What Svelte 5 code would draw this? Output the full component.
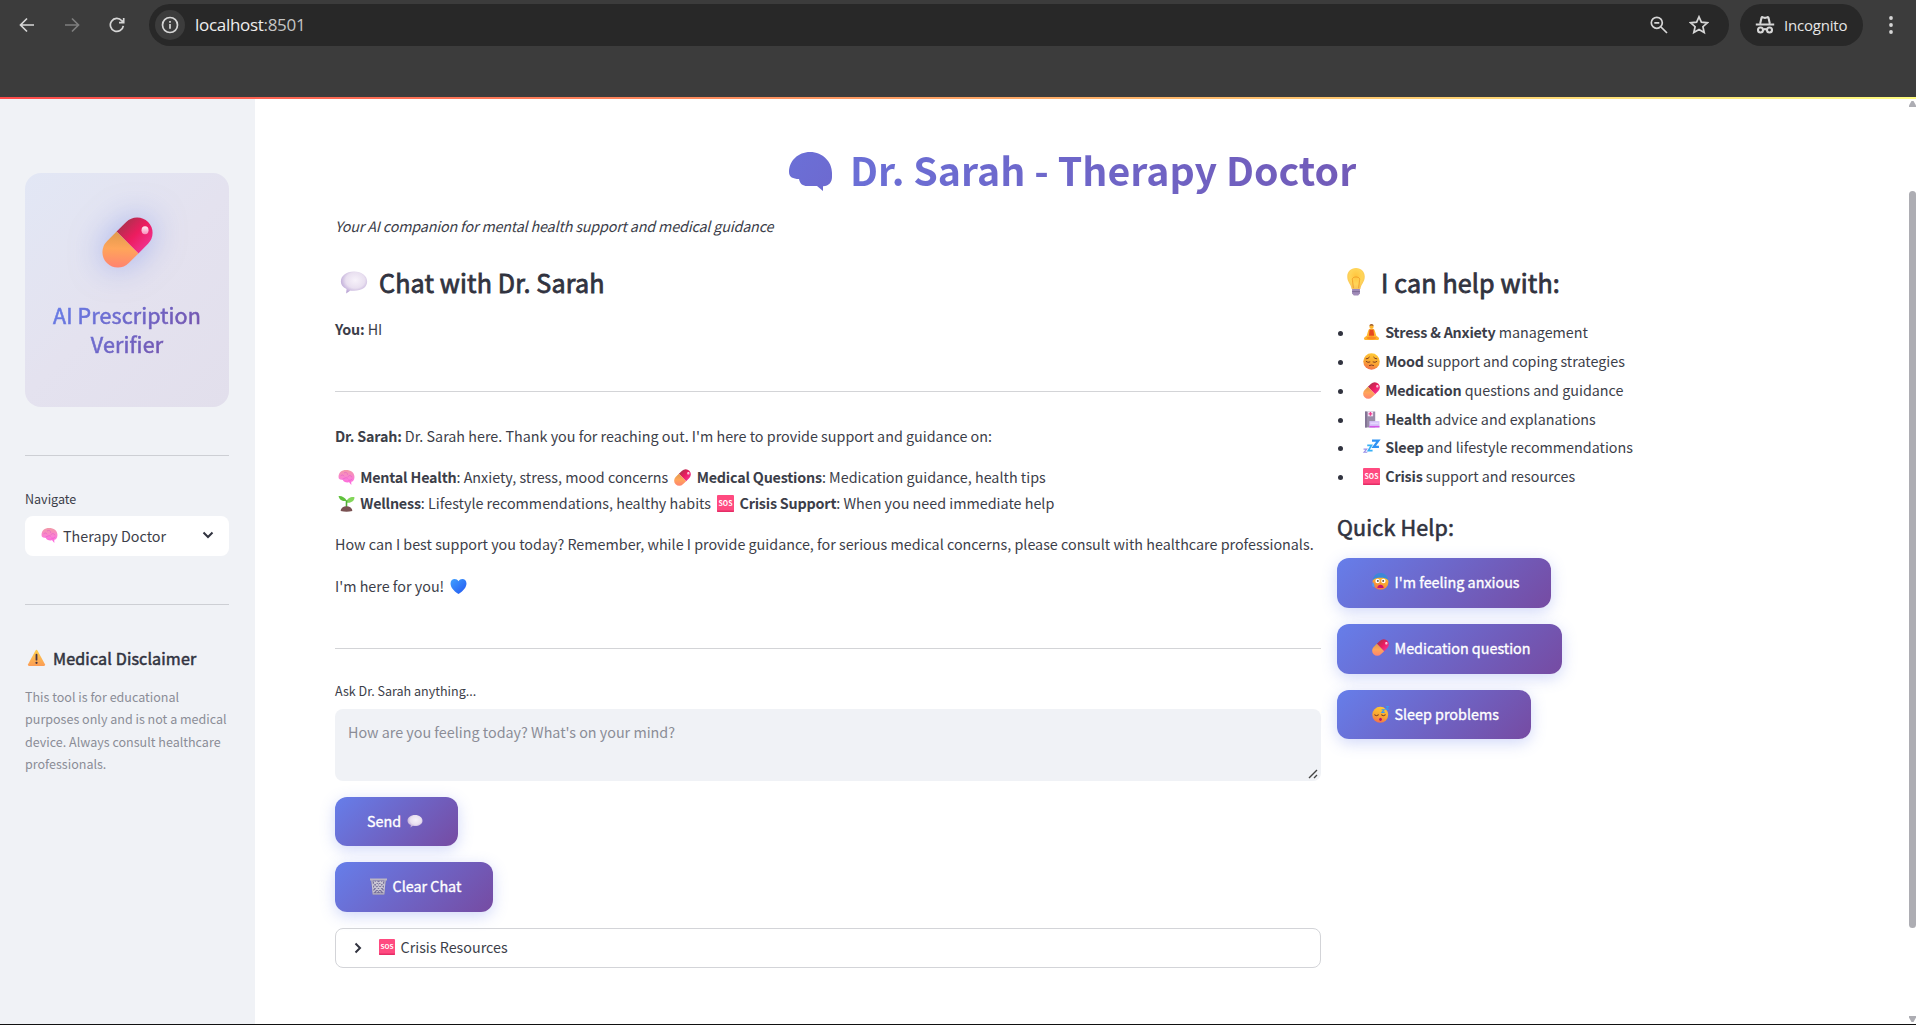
<script>
  const help = [
    ['lotus', 'Stress & Anxiety', 'management'],
    ['pensive', 'Mood', 'support and coping strategies'],
    ['pill', 'Medication', 'questions and guidance'],
    ['hospital', 'Health', 'advice and explanations'],
    ['zzz', 'Sleep', 'and lifestyle recommendations'],
    ['sos', 'Crisis', 'support and resources']
  ];
  const quick = [
    ['anxious', "I'm feeling anxious", 'q1'],
    ['pill', 'Medication question', 'q2'],
    ['sleepy', 'Sleep problems', 'q3']
  ];
</script>

{#snippet icon(name)}
  <svg class="emoji {name}" viewBox="0 0 32 32" aria-hidden="true">
    {#if name === 'pill'}
      <g transform="rotate(45 16 16) translate(16 16) scale(1.140) translate(-16 -16)">
        <path d="M7.500 16V8.500a8.500 8.500 0 0 1 17 0V16z" fill="url(#pillRed)" />
        <path d="M7.500 16v7.500a8.500 8.500 0 0 0 17 0V16z" fill="url(#pillOrange)" />
      </g>
      <ellipse cx="27" cy="8.300" rx="2.200" ry="2.500" fill="url(#shine)" />
    {:else if name === 'brain'}
      <path d="M1 15C1 7 7 2 15 2c9 0 16 5 16 13 0 6-3 9-6 9v6l-4-5c-6 1-11-1-12-5-5 1-8-1-8-5z" fill="url(#brainPink)" />
      <path d="M5 13c2-3 5-2 6 0M12 7c3-2 6 0 6 3M19 14c2-3 6-2 7 1M9 19c3-1 5-4 9-2M20 21c3 1 5 0 6-2" fill="none" stroke="#e65fcb" stroke-width="1.300" stroke-linecap="round" />
    {:else if name === 'speech'}
      <path d="M16 4c9 0 15 5 15 11.500S25 26 16 26c-2 0-3 0-4-.4L7 29l.5-5C3 22 1 19 1 15.500 1 9 7 4 16 4z" fill="url(#speechFill)" />
    {:else if name === 'bulb'}
      <path d="M16 0c6 0 10 4 10 10 0 6-4 8-5 14H11C10 18 6 16 6 10 6 4 10 0 16 0z" fill="url(#bulbFill)" />
      <path d="M13 23l-1-9c-2-5 10-5 8 0l-1 9" fill="none" stroke="#f09a26" stroke-width="1" />
      <path d="M11.500 24h9v5l-2 2.500h-5l-2-2.500z" fill="#a08bb8" />
      <path d="M11.500 27h9" stroke="#766491" stroke-width="1" />
    {:else if name === 'lotus'}
      <circle cx="16" cy="5" r="4" fill="#ffb62c" />
      <path d="M13 9q3-1.500 6 0 3 1 4 6l2 7 4 3q3 4-1 5H4q-4-1-1-5l4-3 2-7q1-5 4-6z" fill="#ffb52e" />
      <path d="M12.500 10q3.500 2 7 0l1.500 12H11z" fill="#e6491f" />
      <path d="M6 26q10-6 20 0-3 4-10 3-7 1-10-3z" fill="#fb8b24" />
      <path d="M12 4a4 4 0 0 1 8 0q-4-2-8 0z" fill="#9a5a2d" />
    {:else if name === 'pensive'}
      <circle cx="16" cy="16" r="15.500" fill="url(#face)" />
      <path d="M6 11q4 0 6-3M26 11q-4 0-6-3M6 16q3 3 7 1M26 16q-3 3-7 1M12 23.500q4-2 8 0" fill="none" stroke="#7a3a22" stroke-width="1.800" stroke-linecap="round" />
    {:else if name === 'anxious'}
      <circle cx="16" cy="16.500" r="15" fill="url(#face)" />
      <path d="M1 14C2 5 9 0 16 0s14 5 15 14c-4-4-9-5-15-5S5 10 1 14z" fill="#3d86d8" />
      <circle cx="10.500" cy="15" r="4.200" fill="#fff" /><circle cx="21.500" cy="15" r="4.200" fill="#fff" />
      <circle cx="11" cy="15" r="1.600" fill="#432" /><circle cx="21" cy="15" r="1.600" fill="#432" />
      <path d="M10 28q1-6 6-6t6 6z" fill="#c9136e" />
      <path d="M2 17q4 7 2 10-4-1-4-5z" fill="#4c9cf0" />
    {:else if name === 'sleepy'}
      <circle cx="15.500" cy="16.500" r="15" fill="url(#face)" />
      <path d="M5 17q3 3 7 0M18 17q3 3 7 0" fill="none" stroke="#6a3120" stroke-width="1.800" stroke-linecap="round" />
      <ellipse cx="16" cy="25" rx="2.500" ry="3" fill="#b5136b" />
      <path d="M18 7h5l-4.500 5H24M26 1h5l-4.500 5H32" fill="none" stroke="#399af2" stroke-width="2" />
    {:else if name === 'hospital'}
      <path d="M4 1h19v30H4z" fill="#998ca8" />
      <path d="M4 1h3v30H4z" fill="#7d6f90" />
      <path d="M9 1h10v9H9z" fill="#f3e3f6" />
      <path d="M14 2v7M10.500 5.500h7" stroke="#ef3e8f" stroke-width="2.500" />
      <path d="M12 19h19v12H12z" fill="#d7c3fa" />
      <path d="M12 28h19v3H12z" fill="#d458e8" />
      <path d="M14 23h15" stroke="#efe6ff" stroke-width="1.500" />
    {:else if name === 'zzz'}
      <path d="M17 3h12L20 15h10" fill="none" stroke="#2f93f4" stroke-width="4.200" />
      <path d="M8 12h8L10 22h8" fill="none" stroke="#36b0f6" stroke-width="3.200" />
      <path d="M1 19h6l-5 6h6" fill="none" stroke="#9a90e8" stroke-width="2.200" />
    {:else if name === 'sos'}
      <rect x="0" y="0" width="32" height="32" rx="2" fill="#ff4a80" />
      <path d="M0 29h32v1a2 2 0 0 1-2 2H2a2 2 0 0 1-2-2z" fill="#e52d66" />
      <text x="16" y="20.500" text-anchor="middle" class="sos-text">SOS</text>
    {:else if name === 'seedling'}
      <path d="M16 10C13 4 6 1 1 2c1 7 8 11 15 9z" fill="#5fc13c" />
      <path d="M16 13C17 6 24 3 31 4c0 7-7 12-15 10z" fill="#83d65a" />
      <path d="M16 10v14" stroke="#4fae35" stroke-width="3" />
      <path d="M5 30q1-9 11-9t11 9q-11 3-22 0z" fill="#7a5152" />
    {:else if name === 'heart'}
      <path d="M16 30C6 24 1 17 1 10c0-9 11-11 15-4 4-7 15-5 15 4 0 7-5 14-15 20z" fill="url(#heartBlue)" />
    {:else if name === 'warning'}
      <path d="M14 3q2-3 4 0l13 24q1 3-2 3H3q-3 0-2-3z" fill="url(#warn)" />
      <path d="M16 10v9" stroke="#453345" stroke-width="3.200" stroke-linecap="round" />
      <circle cx="16" cy="24.500" r="2" fill="#453345" />
    {:else if name === 'trash'}
      <path d="M2 4h28l-3 27H5z" fill="#77719a" />
      <path d="M3.500 4l2.500 25M28.500 4L26 29M7 6l18 20M12 6l14 14M19 6l8 8M25 6L7 26M20 6L6 20M13 6l-8 8M12 27l13-14M20 27L7 14" stroke="#cbc7d5" stroke-width="2" fill="none" />
      <path d="M0 1h32v3.500H0zM5 28.500h22V31H5z" fill="#bcb6c3" />
    {/if}
  </svg>
{/snippet}

<svg class="defs" aria-hidden="true">
  <defs>
    <linearGradient id="pillRed" x1="0" y1="0.300" x2="1" y2="0.300"><stop offset="0" stop-color="#b52e50" /><stop offset="0.500" stop-color="#ec1c5f" /><stop offset="1" stop-color="#f0308a" /></linearGradient>
    <linearGradient id="pillOrange" x1="0" y1="0" x2="1" y2="1"><stop offset="0" stop-color="#e09a4c" /><stop offset="0.400" stop-color="#ffa55a" /><stop offset="1" stop-color="#ff7878" /></linearGradient>
    <linearGradient id="shine" x1="0" y1="0" x2="0" y2="1"><stop offset="0" stop-color="#fff0f5" /><stop offset="1" stop-color="#f790bb" /></linearGradient>
    <linearGradient id="brainPink" x1="0" y1="0" x2="0" y2="1"><stop offset="0" stop-color="#f29aa8" /><stop offset="0.600" stop-color="#fb7fd6" /><stop offset="1" stop-color="#ff5fe0" /></linearGradient>
    <radialGradient id="speechFill" cx="0.550" cy="0.400" r="0.600"><stop offset="0" stop-color="#f7f2fa" /><stop offset="0.600" stop-color="#e9e0f0" /><stop offset="1" stop-color="#bba6d6" /></radialGradient>
    <radialGradient id="bulbFill" cx="0.500" cy="0.400" r="0.600"><stop offset="0" stop-color="#ffc53d" /><stop offset="0.600" stop-color="#ffd558" /><stop offset="1" stop-color="#f8c45a" /></radialGradient>
    <linearGradient id="face" x1="0.700" y1="0" x2="0.400" y2="1"><stop offset="0" stop-color="#ffcb36" /><stop offset="0.600" stop-color="#f9a432" /><stop offset="1" stop-color="#f2704f" /></linearGradient>
    <linearGradient id="heartBlue" x1="0" y1="0" x2="1" y2="1"><stop offset="0" stop-color="#3fa0ff" /><stop offset="1" stop-color="#2456f0" /></linearGradient>
    <linearGradient id="warn" x1="0" y1="0" x2="0" y2="1"><stop offset="0" stop-color="#ffce4a" /><stop offset="1" stop-color="#fb9d55" /></linearGradient>
    <linearGradient id="titleBrain" x1="0" y1="0" x2="1" y2="0.800"><stop offset="0" stop-color="#6b70d7" /><stop offset="1" stop-color="#6d6ad0" /></linearGradient>
  </defs>
</svg>

<div class="window">
  <header class="toolbar">
    <div class="bar">
      <svg class="nav back" viewBox="0 0 16 16"><path d="M15 8H2M8 1.500L1.500 8 8 14.500" /></svg>
      <svg class="nav fwd" viewBox="0 0 16 16"><path d="M1 8h13M8 1.500L14.500 8 8 14.500" /></svg>
      <svg class="nav reload" viewBox="0 0 16 16"><path d="M14.300 8.800A6.500 6.500 0 1 1 12.800 3.700L14.500 5.400M14.700 1v4.700H10" /></svg>
      <div class="omnibox">
        <span class="info"><svg viewBox="0 0 18 18"><circle cx="9" cy="9" r="7.500" /><path d="M9 8v4.800M9 5v1.700" /></svg></span>
        <span class="url">localhost<i>:8501</i></span>
        <svg class="lens" viewBox="0 0 18 18"><circle cx="6.800" cy="6.800" r="5.500" /><path d="M4.300 6.800h5M11 11l6 6" /></svg>
        <svg class="star" viewBox="0 0 20 20"><path d="M10 1.800l2.400 5.400 5.900.6-4.400 3.900 1.300 5.800-5.200-3.100-5.200 3.100 1.300-5.800-4.400-3.900 5.900-.6z" /></svg>
      </div>
      <div class="incognito">
        <svg viewBox="0 0 20 18"><path d="M5.200 7.500l1.300-5.700q.3-.9 1.200-.6l2.300.7 2.300-.7q.9-.3 1.200.6l1.300 5.700M.8 8.500h18.400" /><circle cx="5.500" cy="14" r="2.500" /><circle cx="14.500" cy="14" r="2.500" /><path d="M8 13.700q2-1.200 4 0" /></svg>
        <span>Incognito</span>
      </div>
      <svg class="dots" viewBox="0 0 4 18"><circle cx="2" cy="2" r="1.900" /><circle cx="2" cy="9" r="1.900" /><circle cx="2" cy="16" r="1.900" /></svg>
    </div>
  </header>
  <div class="rainbow"></div>

  <div class="page">
    <aside>
      <div class="card">
        <div class="bigpill">{@render icon('pill')}</div>
        <h2>AI Prescription<br />Verifier</h2>
      </div>
      <hr />
      <div class="label nav-label">Navigate</div>
      <div class="select">
        {@render icon('brain')}<span class="sel-text">Therapy Doctor</span>
        <svg class="chev" viewBox="0 0 12 8"><path d="M1.500 1.500L6 6l4.500-4.500" /></svg>
      </div>
      <hr />
      <h4>{@render icon('warning')}<span>Medical Disclaimer</span></h4>
      <p class="caption">This tool is for educational<br />purposes only and is not a medical<br />device. Always consult healthcare<br />professionals.</p>
    </aside>

    <main>
      <h1>
        <svg class="title-brain" viewBox="0 0 43 39"><path d="M0 20C0 9 9 0 21 0c13 0 22 10 22 21v4c0 5-3 9-9 9.300V39l-6-5H18c-4 0-7-2-8-7-6 0-10-2-10-7z" fill="url(#titleBrain)" /></svg>
        <span>Dr. Sarah - Therapy Doctor</span>
      </h1>
      <p class="subtitle">Your AI companion for mental health support and medical guidance</p>
      <div class="columns">
        <section class="chat">
          <h3>{@render icon('speech')}<span>Chat with Dr. Sarah</span></h3>
          <p class="you"><b>You:</b> HI</p>
          <hr />
          <p class="intro"><b>Dr. Sarah:</b> Dr. Sarah here. Thank you for reaching out. I'm here to provide support and guidance on:</p>
          <p>
            {@render icon('brain')} <b>Mental Health</b>: Anxiety, stress, mood concerns {@render icon('pill')} <b>Medical Questions</b>: Medication guidance, health tips<br />
            {@render icon('seedling')} <b>Wellness</b>: Lifestyle recommendations, healthy habits {@render icon('sos')} <b>Crisis Support</b>: When you need immediate help
          </p>
          <p>How can I best support you today? Remember, while I provide guidance, for serious medical concerns, please consult with healthcare professionals.</p>
          <p class="outro">I'm here for you! {@render icon('heart')}</p>
          <hr class="second" />
          <div class="label">Ask Dr. Sarah anything...</div>
          <div class="textarea">
            <span>How are you feeling today? What's on your mind?</span>
            <svg class="grip" viewBox="0 0 10 10"><path d="M1 9l8-8M6 9l3-3" /></svg>
          </div>
          <button class="send"><span>Send</span>{@render icon('speech')}</button>
          <button class="clear">{@render icon('trash')}<span>Clear Chat</span></button>
          <div class="expander">
            <svg class="chev" viewBox="0 0 8 12"><path d="M1.500 1.500L6 6l-4.500 4.500" /></svg>
            {@render icon('sos')}<span>Crisis Resources</span>
          </div>
        </section>
        <section class="helpcol">
          <h3>{@render icon('bulb')}<span>I can help with:</span></h3>
          <ul>
            {#each help as [ic, strong, rest]}
              <li>{@render icon(ic)} <b>{strong}</b> {rest}</li>
            {/each}
          </ul>
          <h4>Quick Help:</h4>
          {#each quick as [ic, text, cls]}
            <button class={cls}>{@render icon(ic)}<span>{text}</span></button>
          {/each}
        </section>
      </div>
    </main>

    <div class="scrollbar">
      <svg viewBox="0 0 7 6"><path d="M0 6V4.500L2.500 0h2L7 4.500V6z" /></svg>
      <div class="thumb"></div>
      <svg viewBox="0 0 7 6"><path d="M0 0v1.500L2.500 6h2L7 1.500V0z" /></svg>
    </div>
  </div>
</div>

<style>
  :global(body) { background: #fff; overflow: hidden; }
  .window {
    width: 1916px; height: 1025px; box-sizing: border-box; border-bottom: 1px solid #111;
    display: flex; flex-direction: column; overflow: hidden;
    font-family: 'Noto Sans CJK SC', sans-serif; font-size: 14.330px; color: #3c3e49;
  }
  .defs { position: absolute; width: 0; height: 0; }
  h1, h2, h3, h4, p, ul { margin: 0; padding: 0; }
  b { font-weight: 600; letter-spacing: -0.200px; }
  hr { border: 0; height: 1px; background: #d3d4d7; margin: 0; width: 100%; }

  .toolbar { height: 97px; background: #3c3c3c; flex: none; }
  .bar { display: flex; align-items: center; height: 43px; padding: 3px 0 0 19px; }
  .bar svg { fill: none; stroke: #d6d6d6; stroke-width: 1.700; flex: none; }
  .nav { width: 16px; height: 16px; margin-right: 29px; }
  .bar .fwd { stroke: #7e7e7e; }
  .bar .reload { margin-right: 24px; }
  .omnibox { width: 1580px; height: 42px; border-radius: 21px; background: #282828; display: flex; align-items: center; box-sizing: border-box; padding: 0 20px 0 6px; }
  .info { width: 30px; height: 30px; border-radius: 50%; background: #3c3c3c; display: flex; align-items: center; justify-content: center; margin-right: 10px; }
  .info svg { width: 18px; height: 18px; }
  .url { flex: 1; font: 17px/24px 'Open Sans', sans-serif; letter-spacing: -0.300px; color: #eee; }
  .url i { font-style: normal; color: #c4c4c4; }
  .lens { width: 18px; height: 18px; margin-right: 21px; }
  .star { width: 20px; height: 20px; }
  .incognito { margin-left: 11px; width: 123px; height: 42px; border-radius: 21px; background: #282828; display: flex; align-items: center; box-sizing: border-box; padding-left: 15px; gap: 9px; font: 15px/20px 'Open Sans', sans-serif; letter-spacing: -0.200px; color: #e6e6e6; }
  .incognito svg { width: 20px; height: 18px; stroke-width: 2.100; }
  .bar .dots { width: 4px; height: 18px; margin-left: 26px; fill: #d6d6d6; stroke: none; }
  .rainbow { height: 2px; flex: none; background: linear-gradient(90deg, #ff4b4b, #fffd80); }

  .page { flex: 1; display: flex; min-height: 0; }
  aside { width: 255px; box-sizing: border-box; background: #f0f2f6; padding: 74px 26px 0 25px; flex: none; }
  .card { height: 234px; border-radius: 16px; background: linear-gradient(135deg, #e2e7f5, #e4e2ef 50%, #e2dfec); display: flex; flex-direction: column; align-items: center; box-sizing: border-box; padding-top: 44px; }
  .bigpill { width: 51px; height: 51px; display: flex; filter: drop-shadow(0 0 16px rgba(102, 126, 234, 0.5)); }
  .bigpill .emoji { width: 51px; height: 51px; margin: 0; }
  h2 { margin-top: 33px; width: 153px; white-space: nowrap; text-align: center; font-size: 21.500px; letter-spacing: 0.120px; line-height: 28.800px; font-weight: 400; -webkit-text-stroke: 0.600px transparent; color: transparent; background: linear-gradient(135deg, #667eea, #764ba2); background-clip: text; -webkit-background-clip: text; }
  aside hr { margin-top: 48px; background: #cdcfd4; }
  .label { font-size: 12.540px; line-height: 22px; }
  .nav-label { margin-top: 32px; margin-bottom: 6px; }
  .select { height: 40px; border-radius: 8px; background: #fff; display: flex; align-items: center; box-sizing: border-box; padding: 0 15px 2px 13px; }
  .sel-text { flex: 1; margin-left: 3px; }
  .chev { fill: none; stroke: #31333f; stroke-width: 2; width: 12px; height: 8px; }
  aside h4 { margin-top: 41px; font-size: 16.120px; letter-spacing: 0.120px; line-height: 24px; font-weight: 400; -webkit-text-stroke: 0.500px #31333f; color: #31333f; display: flex; align-items: center; }
  aside h4 .emoji { width: 19px; height: 18px; margin: 0 7px 0 2px; }
  .caption { margin-top: 16px; font-size: 12.540px; line-height: 22.400px; color: #8b8d97; white-space: nowrap; }

  .emoji { width: 17px; height: 17px; margin: 0 2.500px; vertical-align: -3px; overflow: visible; flex: none; -webkit-text-stroke: 0; }
  .sos-text { font: bold 13px 'Noto Sans CJK SC', sans-serif; fill: #fff; letter-spacing: 0; }

  main { flex: 1; box-sizing: border-box; padding: 43px 79px 0 80px; white-space: nowrap; }
  h1 { height: 54px; line-height: 54px; font-size: 39.300px; font-weight: 700; display: flex; align-items: center; padding-left: 454px; }
  h1 span { color: transparent; background: linear-gradient(90deg, #6b6fd6, #725bb8); background-clip: text; -webkit-background-clip: text; }
  .title-brain { width: 43px; height: 39px; margin: 4px 18px 0 0; }
  .subtitle { margin-top: 17px; line-height: 26px; font-style: italic; letter-spacing: -0.170px; }
  .columns { display: grid; grid-template-columns: 986px 1fr; gap: 16px; margin-top: 26px; }
  section { display: flex; flex-direction: column; align-items: flex-start; min-width: 0; }
  h3 { height: 34px; line-height: 34px; font-size: 25.070px; letter-spacing: 0.150px; font-weight: 400; -webkit-text-stroke: 0.800px #31333f; display: flex; align-items: center; color: #31333f; }
  h3 .emoji { width: 28px; height: 28px; margin: 0 11px 0 5px; }
  .chat p { line-height: 26px; margin-top: 15px; }
  .chat .you { margin-top: 17px; }
  .chat hr { margin-top: 49px; }
  .chat .intro { margin-top: 31px; }
  .chat .outro { margin-top: 16px; }
  .chat hr.second { margin-top: 49px; }
  .chat .label { margin-top: 31px; }
  .textarea { margin-top: 7px; width: 100%; height: 72px; box-sizing: border-box; border-radius: 8px; background: #f0f2f6; color: #8b8d97; padding: 10px 13px; line-height: 26px; position: relative; }
  .grip { position: absolute; right: 3px; bottom: 2px; width: 10px; height: 10px; fill: none; stroke: #444; stroke-width: 1.400; }
  button { border: 0; margin: 16px 0 0; height: 50px; border-radius: 12px; background: linear-gradient(135deg, #667eea, #764ba2); box-shadow: 0 4px 15px rgba(102, 126, 234, 0.3); color: #fff; font: 400 14.330px/24px 'Noto Sans CJK SC', sans-serif; -webkit-text-stroke: 0.350px #fff; display: flex; align-items: center; padding: 0 0 2px 32px; box-sizing: border-box; white-space: nowrap; }
  button .emoji { margin-right: 6px; }
  .send { width: 123px; height: 49px; }
  .send .emoji { width: 16px; height: 16px; margin-left: 6px; }
  .clear { width: 158px; }
  .expander { margin-top: 16px; width: 100%; height: 40px; box-sizing: border-box; border: 1px solid #d3d4d8; border-radius: 8px; display: flex; align-items: center; padding: 0 0 3px 18px; }
  .expander .chev { width: 8px; height: 12px; margin: 2px 14px 0 0; }
  .expander .emoji { width: 16px; height: 16px; margin: 1px 6px 0 2.500px; }
  ul { margin-top: 19.200px; list-style: none; }
  li { line-height: 28.800px; padding-left: 23px; position: relative; }
  li::before { content: ''; position: absolute; left: 1px; top: 13px; width: 5px; height: 5px; border-radius: 50%; background: #31333f; }
  .helpcol h4 { margin-top: 20.600px; font-size: 21.500px; letter-spacing: 0.150px; line-height: 30px; font-weight: 400; -webkit-text-stroke: 0.600px #31333f; color: #31333f; }
  .q1 { width: 214px; } .q2 { width: 225px; } .q3 { width: 194px; height: 49px; padding-bottom: 0; }

  .scrollbar { width: 7px; flex: none; display: flex; flex-direction: column; padding: 2px 0; }
  .scrollbar svg { width: 7px; height: 6px; fill: #adadb3; }
  .thumb { height: 737px; margin: 84px 0 88px; border-radius: 4px; background: #adadb3; }
</style>
